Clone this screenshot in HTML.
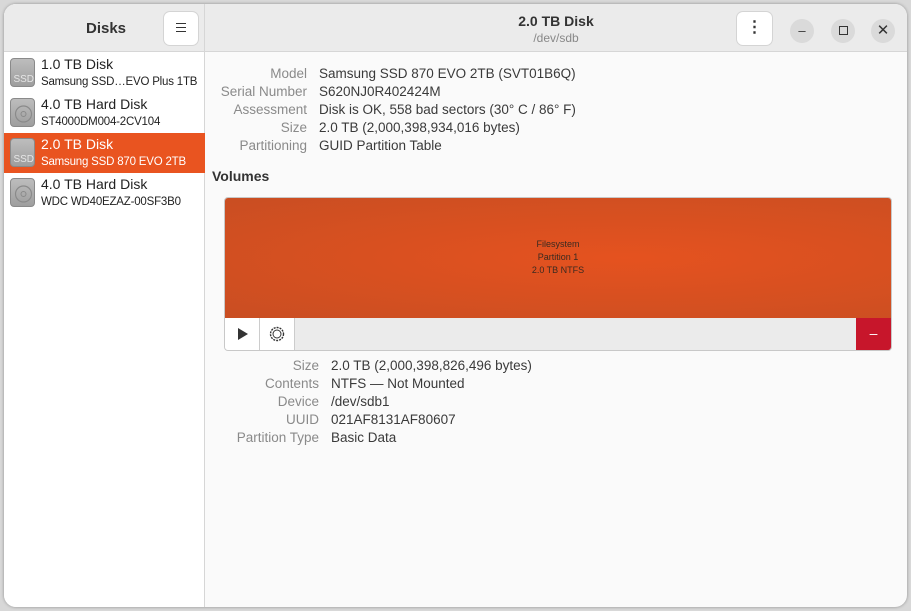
<!DOCTYPE html>
<html><head><style>
*{margin:0;padding:0;box-sizing:border-box}
body{width:911px;height:611px;background:#d8d8d8;font-family:"Liberation Sans",sans-serif;position:relative;overflow:hidden}
.win{position:absolute;left:4px;top:4px;width:903px;height:603px;border-radius:12px;overflow:hidden;background:#fafafa;box-shadow:0 0 3px rgba(0,0,0,.35)}
.side{position:absolute;left:0;top:0;width:201px;height:603px;background:#fff;border-right:1px solid #d6d6d6}
.sidehead{height:48px;background:#ebebeb;border-bottom:1px solid #d6d6d6;position:relative}
.sidehead .t{position:absolute;left:82px;top:16px;font-weight:bold;font-size:15px;color:#333}
.btn{position:absolute;background:#fff;border-radius:6px;box-shadow:0 0 0 1px #d4d4d4;}
.mainhead{position:absolute;left:201px;top:0;right:0;height:48px;background:#ebebeb;border-bottom:1px solid #d6d6d6}
.item{position:absolute;left:0;width:201px;height:40px;white-space:nowrap}
.item .ic{position:absolute;left:6px;top:5px;width:25px;height:29px;border-radius:4px;background:linear-gradient(#bdbdbd,#9e9e9e);border:1px solid #8a8a8a}
.item .ic span{position:absolute;right:0px;bottom:1px;font-size:10px;color:#e6e6e6}
.item .a{position:absolute;left:37px;top:3px;font-size:14px;color:#222}
.item .b{position:absolute;left:37px;top:23px;font-size:11.5px;color:#222;letter-spacing:-0.2px}
.sel{background:#e95420}
.sel .a,.sel .b{color:#fff}
.lbl{position:absolute;font-size:13.5px;color:#8a8a8a;text-align:right;white-space:nowrap}
.val{position:absolute;font-size:13.5px;color:#3a3a3a;white-space:nowrap}
.circ{position:absolute;top:15px;width:24px;height:24px;border-radius:50%;background:#dadada;color:#333;text-align:center;font-size:13px;line-height:24px}
</style></head><body>
<div class="win">
<div class="side">
 <div class="sidehead"><div class="t">Disks</div>
  <div class="btn" style="left:160px;top:8px;width:34px;height:33px"><div style="position:absolute;left:12px;top:11px;width:10px;height:9px;border-top:1px solid #333;border-bottom:1px solid #333"></div><div style="position:absolute;left:12px;top:15px;width:10px;height:1px;background:#333"></div></div>
 </div>
 <div class="item" style="top:49px"><div class="ic"><span>SSD</span></div><div class="a">1.0 TB Disk</div><div class="b">Samsung SSD…EVO Plus 1TB</div></div>
 <div class="item" style="top:89px"><div class="ic"><svg width="25" height="29" style="position:absolute;left:0;top:0"><circle cx="12.5" cy="15" r="8" fill="none" stroke="#8a8a8a" stroke-width="1.2"/><circle cx="12.5" cy="15" r="2.5" fill="none" stroke="#8a8a8a"/></svg></div><div class="a">4.0 TB Hard Disk</div><div class="b">ST4000DM004-2CV104</div></div>
 <div class="item sel" style="top:129px"><div class="ic"><span>SSD</span></div><div class="a">2.0 TB Disk</div><div class="b">Samsung SSD 870 EVO 2TB</div></div>
 <div class="item" style="top:169px"><div class="ic"><svg width="25" height="29" style="position:absolute;left:0;top:0"><circle cx="12.5" cy="15" r="8" fill="none" stroke="#8a8a8a" stroke-width="1.2"/><circle cx="12.5" cy="15" r="2.5" fill="none" stroke="#8a8a8a"/></svg></div><div class="a">4.0 TB Hard Disk</div><div class="b">WDC WD40EZAZ-00SF3B0</div></div>
</div>
<div class="mainhead">
 <div style="position:absolute;left:0;right:0;top:9px;text-align:center;font-weight:bold;font-size:14px;color:#333">2.0 TB Disk</div>
 <div style="position:absolute;left:0;right:0;top:27px;text-align:center;font-size:12px;color:#888">/dev/sdb</div>
 <div class="btn" style="left:532px;top:8px;width:35px;height:33px;text-align:center;font-size:16px;line-height:32px;color:#333;font-weight:bold">⋮</div>
 <div class="circ" style="left:585px">–</div>
 <div class="circ" style="left:626px"><div style="width:9px;height:9px;border:1px solid #333;margin:7px auto"></div></div>
 <div class="circ" style="left:666px;font-size:15px">✕</div>
</div>
<div class="lbl" style="left:200px;width:103px;top:62px">Model</div><div class="val" style="left:315px;top:62px">Samsung SSD 870 EVO 2TB (SVT01B6Q)</div>
<div class="lbl" style="left:200px;width:103px;top:80px">Serial Number</div><div class="val" style="left:315px;top:80px">S620NJ0R402424M</div>
<div class="lbl" style="left:200px;width:103px;top:98px">Assessment</div><div class="val" style="left:315px;top:98px">Disk is OK, 558 bad sectors (30° C / 86° F)</div>
<div class="lbl" style="left:200px;width:103px;top:116px">Size</div><div class="val" style="left:315px;top:116px">2.0 TB (2,000,398,934,016 bytes)</div>
<div class="lbl" style="left:200px;width:103px;top:134px">Partitioning</div><div class="val" style="left:315px;top:134px">GUID Partition Table</div>
<div style="position:absolute;left:208px;top:164px;font-weight:bold;font-size:14px;color:#333">Volumes</div>
<div style="position:absolute;left:220px;top:193px;width:668px;height:154px;border:1px solid #c8c8c8;border-radius:4px;overflow:hidden;background:#ebebeb">
 <div style="height:120px;background:radial-gradient(ellipse at 60% 50%,#e5521f,#c94e22);text-align:center;color:#3a2a20;font-size:9px;line-height:13px;padding-top:40px">Filesystem<br>Partition 1<br>2.0 TB NTFS</div>
 <div style="position:absolute;left:0;top:120px;width:35px;height:33px;background:#fff;border-right:1px solid #ccc"><svg width="35" height="33"><path d="M13 10 L23 16 L13 22Z" fill="#333"/></svg></div>
 <div style="position:absolute;left:35px;top:120px;width:35px;height:33px;background:#fff;border-right:1px solid #ccc"><svg width="35" height="33"><circle cx="17" cy="16" r="6.5" fill="none" stroke="#333" stroke-width="1.4" stroke-dasharray="2 1"/><circle cx="17" cy="16" r="4" fill="none" stroke="#333"/></svg></div>
 <div style="position:absolute;right:0;top:120px;width:35px;height:33px;background:#c7162b;color:#fff;text-align:center;line-height:31px;font-size:14px">–</div>
</div>
<div class="lbl" style="left:200px;width:115px;top:354px">Size</div><div class="val" style="left:327px;top:354px">2.0 TB (2,000,398,826,496 bytes)</div>
<div class="lbl" style="left:200px;width:115px;top:372px">Contents</div><div class="val" style="left:327px;top:372px">NTFS — Not Mounted</div>
<div class="lbl" style="left:200px;width:115px;top:390px">Device</div><div class="val" style="left:327px;top:390px">/dev/sdb1</div>
<div class="lbl" style="left:200px;width:115px;top:408px">UUID</div><div class="val" style="left:327px;top:408px">021AF8131AF80607</div>
<div class="lbl" style="left:200px;width:115px;top:426px">Partition Type</div><div class="val" style="left:327px;top:426px">Basic Data</div>
</div>
</body></html>
